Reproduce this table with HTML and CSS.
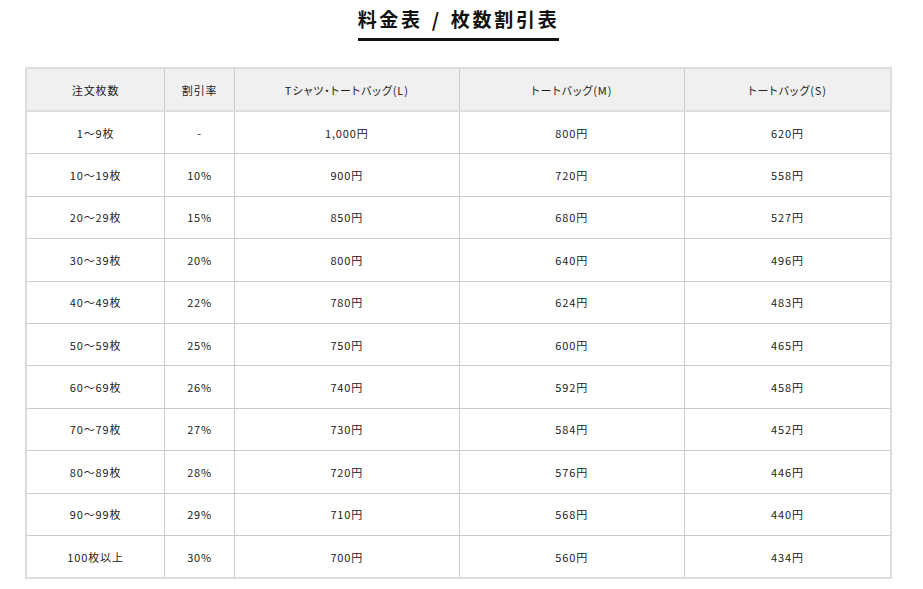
FILE: index.html
```html
<!DOCTYPE html>
<html lang="ja">
<head>
<meta charset="utf-8">
<link rel="stylesheet" href="styles.css">
</head>
<body>
<div class="page">
  <div class="heading-wrap"><h1 class="heading">料金表 / 枚数割引表</h1></div>
  <table class="price">
    <colgroup>
      <col class="c1"><col class="c2"><col class="c3"><col class="c4"><col class="c5">
    </colgroup>
    <thead>
      <tr><th>注文枚数</th><th>割引率</th><th>Tシャツ・トートバッグ(L)</th><th>トートバッグ(M)</th><th>トートバッグ(S)</th></tr>
    </thead>
    <tbody>
      <tr><td>1〜9枚</td><td>-</td><td>1,000円</td><td>800円</td><td>620円</td></tr>
      <tr><td>10〜19枚</td><td>10%</td><td>900円</td><td>720円</td><td>558円</td></tr>
      <tr><td>20〜29枚</td><td>15%</td><td>850円</td><td>680円</td><td>527円</td></tr>
      <tr><td>30〜39枚</td><td>20%</td><td>800円</td><td>640円</td><td>496円</td></tr>
      <tr><td>40〜49枚</td><td>22%</td><td>780円</td><td>624円</td><td>483円</td></tr>
      <tr><td>50〜59枚</td><td>25%</td><td>750円</td><td>600円</td><td>465円</td></tr>
      <tr><td>60〜69枚</td><td>26%</td><td>740円</td><td>592円</td><td>458円</td></tr>
      <tr><td>70〜79枚</td><td>27%</td><td>730円</td><td>584円</td><td>452円</td></tr>
      <tr><td>80〜89枚</td><td>28%</td><td>720円</td><td>576円</td><td>446円</td></tr>
      <tr><td>90〜99枚</td><td>29%</td><td>710円</td><td>568円</td><td>440円</td></tr>
      <tr><td>100枚以上</td><td>30%</td><td>700円</td><td>560円</td><td>434円</td></tr>
    </tbody>
  </table>
</div>
</body>
</html>
```

FILE: styles.css
```css
html, body {
  margin: 0;
  padding: 0;
  background: #fff;
}
body {
  font-family: "Noto Sans CJK JP", "Noto Sans", sans-serif;
  color: #222;
  font-feature-settings: "palt";
}
.page {
  padding: 0 31px 0 25px;
}
.heading-wrap {
  display: flex;
  justify-content: center;
  padding-top: 6px;
}
.heading {
  margin: 0;
  font-size: 19px;
  font-weight: 700;
  letter-spacing: 2.7px;
  word-spacing: 2px;
  line-height: 26px;
  padding: 0 0 6px 0;
  border-bottom: 3px solid #111;
  color: #111;
}
.price {
  margin-top: 26px;
  width: 867px;
  border-collapse: collapse;
  border: 2px solid #ddd;
  font-size: 11px;
  letter-spacing: 0.08em;
  color: #222;
}
.c1 { width: 139px; }
.c2 { width: 70px; }
.c3 { width: 225px; }
.c4 { width: 226px; }
.c5 { width: 207px; }
.price th, .price td {
  border: 1px solid #ccc;
  text-align: center;
  padding: 0;
  font-weight: 400;
}
.price th {
  background: #f0f0f0;
  height: 41px;
  border-top: 2px solid #ddd;
  border-bottom: 2px solid #ddd;
}
.price th:first-child, .price td:first-child { border-left: 2px solid #ddd; }
.price th:last-child, .price td:last-child { border-right: 2px solid #ddd; }
.price td {
  height: 41.4px;
}
.price tbody tr:last-child td { border-bottom: 2px solid #ddd; }
```
